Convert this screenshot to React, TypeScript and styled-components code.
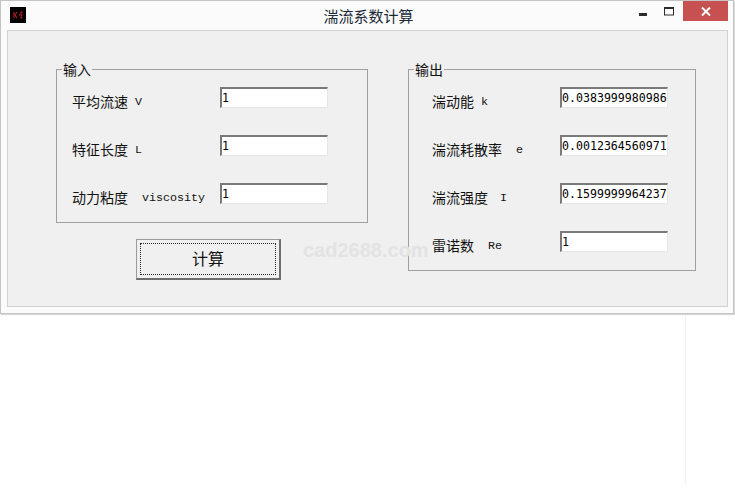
import React from "react";
import styled, { createGlobalStyle } from "styled-components";

const Global = createGlobalStyle`
  html, body { margin: 0; padding: 0; background: #fff; }
  #root { width: 735px; height: 500px; overflow: hidden; }
  * { box-sizing: border-box; }
`;

const cjk = `"Noto Sans CJK SC", "Liberation Sans", sans-serif`;
const mono = `"Liberation Mono", "Noto Sans CJK SC", monospace`;

const Win = styled.div`
  position: relative;
  width: 734px;
  height: 314px;
  background: #fbfbfb;
  border: 1px solid #c4c4c4;
  box-shadow: 1px 1px 1px #d8d8d8;
  display: flex;
  flex-direction: column;
  font-family: ${cjk};
`;

const TitleBar = styled.div`
  height: 28px;
  flex: none;
  display: flex;
  align-items: flex-start;
  padding-left: 9px;
`;

const AppIcon = styled.svg`
  width: 16px;
  height: 16px;
  margin-top: 6px;
  flex: none;
`;

const Title = styled.div`
  flex: 1;
  text-align: center;
  font-size: 15px;
  line-height: 20px;
  margin-top: 5px;
  padding-left: 80px;
  color: #1c2a38;
`;

const Controls = styled.div`
  display: flex;
  align-items: flex-start;
  flex: none;
  margin-right: 5px;
`;

const CtlIcon = styled.svg`
  width: 26px;
  height: 20px;
  display: block;
`;

const CloseBtn = styled.div`
  width: 45px;
  height: 20px;
  background: #c75050;
  display: flex;
  align-items: center;
  justify-content: center;
`;

const Panel = styled.div`
  flex: 1;
  margin: 1px 5px 6px 6px;
  background: #f0f0f0;
  border: 1px solid #d2d2d2;
  padding: 38px 0 0 48px;
  display: flex;
  align-items: flex-start;
  gap: 40px;
`;

const Column = styled.div`
  display: flex;
  flex-direction: column;
  align-items: flex-start;
`;

const Group = styled.div<{ $w: number; $pl: number }>`
  position: relative;
  width: ${(p) => p.$w}px;
  border: 1px solid #a0a0a0;
  padding: 17px 0 18px ${(p) => p.$pl}px;
  display: flex;
  flex-direction: column;
  gap: 27px;
`;

const Legend = styled.div`
  position: absolute;
  left: 5px;
  top: -11px;
  padding: 0 1px;
  font-size: 14px;
  line-height: 20px;
  background: #f0f0f0;
  color: #111;
`;

const Row = styled.div`
  display: flex;
  align-items: flex-start;
  height: 21px;
`;

const Label = styled.div<{ $w: number }>`
  width: ${(p) => p.$w}px;
  flex: none;
  font-size: 14px;
  line-height: 20px;
  padding-top: 4px;
  color: #111;
  white-space: nowrap;
  display: flex;
`;

const Sym = styled.span<{ $gap: number }>`
  margin-left: ${(p) => p.$gap}px;
  padding-top: 1px;
  font-family: ${mono};
  font-size: 11.7px;
  color: #111;
  line-height: 20px;
`;

const Field = styled.input`
  width: 108px;
  height: 21px;
  padding: 0 0 1px 0;
  margin: 0;
  font-family: "DejaVu Sans Mono", monospace;
  font-size: 11.6px;
  color: #000;
  background: #fff;
  border-style: solid;
  border-width: 2px 1px 1px 2px;
  border-color: #7a7a7a #e6e6e6 #e6e6e6 #7a7a7a;
  outline: none;
  border-radius: 0;
`;

const Calc = styled.button`
  margin: 16px 0 0 80px;
  width: 145px;
  height: 41px;
  padding: 3px;
  background: #f0f0f0;
  border-style: solid;
  border-width: 1px 2px 2px 1px;
  border-color: #9a9a9a #6e6e6e #6e6e6e #9a9a9a;
  border-radius: 0;
  font-family: ${cjk};
  font-size: 16px;
  color: #111;
  display: flex;
`;

const Focus = styled.span`
  flex: 1;
  border: 1px dotted #222;
  padding-bottom: 2px;
  display: flex;
  align-items: center;
  justify-content: center;
`;

const Watermark = styled.div`
  position: absolute;
  left: 302px;
  top: 238px;
  font-family: "Liberation Sans", sans-serif;
  font-weight: 700;
  font-size: 20px;
  line-height: 22px;
  color: #e3e3e3;
  pointer-events: none;
`;

const Below = styled.div`
  width: 686px;
  height: 171px;
  border-right: 1px solid #f1f1f1;
`;

const inputs = [
  { l: "平均流速", s: "V", g: 7, v: "1" },
  { l: "特征长度", s: "L", g: 7, v: "1" },
  { l: "动力粘度", s: "viscosity", g: 14, v: "1" },
];
const outputs = [
  { l: "湍动能", s: "k", g: 7, v: "0.0383999980986" },
  { l: "湍流耗散率", s: "e", g: 14, v: "0.0012364560971" },
  { l: "湍流强度", s: "I", g: 12, v: "0.1599999964237" },
  { l: "雷诺数", s: "Re", g: 14, v: "1" },
];

export default function App() {
  return (
    <>
      <Global />
      <Win>
        <TitleBar>
          <AppIcon viewBox="0 0 16 16">
            <rect width="16" height="16" fill="#000" />
            <path d="M4 5v6M7 5L5 8l2 3M9 8h1M12.500 5h-1.500v6h1.500M11 8h1.500" stroke="#d8202a" strokeWidth="1" fill="none" />
          </AppIcon>
          <Title>湍流系数计算</Title>
          <Controls>
            <CtlIcon viewBox="0 0 26 20">
              <rect x="8" y="12" width="8" height="3" fill="#2b2b2b" />
            </CtlIcon>
            <CtlIcon viewBox="0 0 26 20">
              <rect x="7.500" y="7" width="9" height="7" fill="none" stroke="#2b2b2b" strokeWidth="1" />
              <rect x="7" y="6" width="10" height="2" fill="#2b2b2b" />
            </CtlIcon>
            <CloseBtn>
              <svg width="10" height="9" viewBox="0 0 10 9">
                <path d="M1 0.500L9 8.500M9 0.500L1 8.500" stroke="#fff" strokeWidth="2" fill="none" />
              </svg>
            </CloseBtn>
          </Controls>
        </TitleBar>
        <Panel>
          <Column>
            <Group $w={312} $pl={15}>
              <Legend>输入</Legend>
              {inputs.map((r) => (
                <Row key={r.l}>
                  <Label $w={148}>
                    {r.l}
                    <Sym $gap={r.g}>{r.s}</Sym>
                  </Label>
                  <Field readOnly value={r.v} />
                </Row>
              ))}
            </Group>
            <Calc>
              <Focus>计算</Focus>
            </Calc>
          </Column>
          <Column>
            <Group $w={288} $pl={23}>
              <Legend>输出</Legend>
              {outputs.map((r) => (
                <Row key={r.l}>
                  <Label $w={128}>
                    {r.l}
                    <Sym $gap={r.g}>{r.s}</Sym>
                  </Label>
                  <Field readOnly value={r.v} />
                </Row>
              ))}
            </Group>
          </Column>
        </Panel>
        <Watermark>cad2688.com</Watermark>
      </Win>
      <Below />
    </>
  );
}
